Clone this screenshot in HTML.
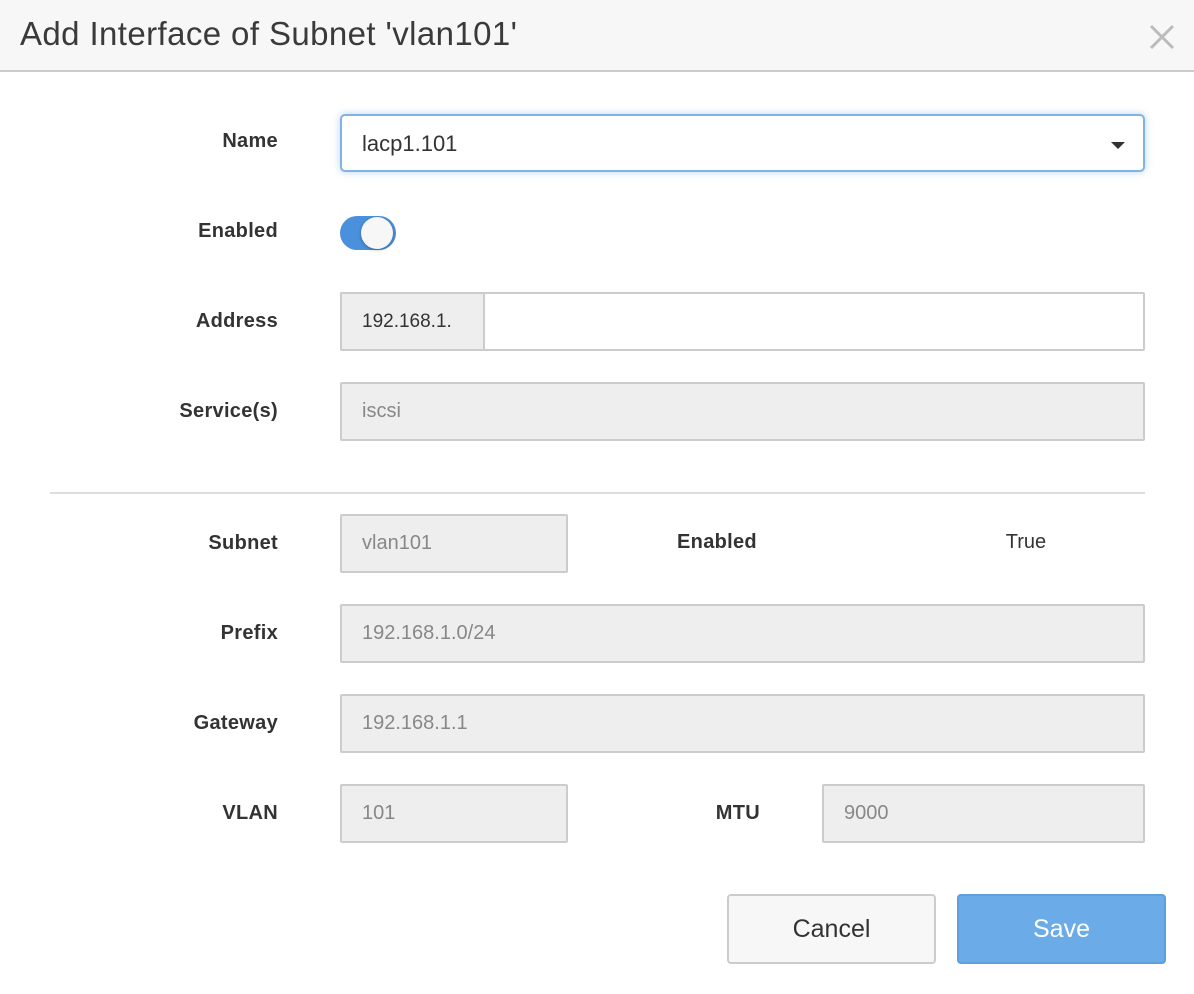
<!DOCTYPE html>
<html><head><style>
body{margin:0;width:1194px;height:994px;background:#fff;font-family:"Liberation Sans",sans-serif;position:relative;overflow:hidden}
.hd{position:absolute;left:0;top:0;width:1194px;height:70px;background:#f7f7f7;border-bottom:2px solid #ccc}
.t{position:absolute;left:20px;top:15px;font-size:33px;color:#3a3a3a;letter-spacing:0.4px}
.x{position:absolute;left:1148px;top:23px}
.l{position:absolute;width:278px;left:0;text-align:right;font-size:20px;font-weight:bold;color:#333;line-height:24px;letter-spacing:0.3px}
.i{position:absolute;box-sizing:border-box;height:59px;border:2px solid #ccc;background:#eee;font-size:20px;color:#888;line-height:55px;padding-left:20px;border-radius:2px}
.b{position:absolute;box-sizing:border-box;top:894px;height:70px;font-size:25px;text-align:center;line-height:66px;border-radius:4px}
</style></head><body>
<div class="hd"><div class="t">Add Interface of Subnet 'vlan101'</div>
<svg class="x" width="28" height="28" viewBox="0 0 28 28"><path d="M3 3L25 25M25 3L3 25" stroke="#bbb" stroke-width="3"/></svg></div>

<div class="l" style="top:129px">Name</div>
<div class="i" style="left:340px;top:114px;width:805px;height:58px;background:#fff;border-color:#7fb2e5;color:#333;font-size:22px;border-radius:5px;box-shadow:0 0 8px rgba(100,160,230,.45)">lacp1.101</div>
<svg style="position:absolute;left:1110px;top:140px" width="16" height="10"><path d="M1 2h14L8 9z" fill="#333"/></svg>

<div class="l" style="top:219px">Enabled</div>
<div style="position:absolute;left:340px;top:216px;width:56px;height:34px;border-radius:17px;background:#4a90dc"></div>
<div style="position:absolute;left:361px;top:217px;width:32px;height:32px;border-radius:16px;background:#f7f7f7;box-shadow:0 1px 3px rgba(0,0,0,.3)"></div>

<div class="l" style="top:309px">Address</div>
<div class="i" style="left:340px;top:292px;width:805px;background:#fff"></div>
<div class="i" style="left:340px;top:292px;width:145px;color:#333;font-size:19px">192.168.1.</div>

<div class="l" style="top:399px">Service(s)</div>
<div class="i" style="left:340px;top:382px;width:805px">iscsi</div>

<div style="position:absolute;left:50px;top:492px;width:1095px;height:2px;background:#ddd"></div>

<div class="l" style="top:531px">Subnet</div>
<div class="i" style="left:340px;top:514px;width:228px">vlan101</div>
<div style="position:absolute;left:617px;width:200px;text-align:center;top:531px;font-size:20px;font-weight:bold;color:#333;letter-spacing:0.3px">Enabled</div>
<div style="position:absolute;left:926px;width:200px;text-align:center;top:531px;font-size:20px;color:#333">True</div>

<div class="l" style="top:621px">Prefix</div>
<div class="i" style="left:340px;top:604px;width:805px">192.168.1.0/24</div>

<div class="l" style="top:711px">Gateway</div>
<div class="i" style="left:340px;top:694px;width:805px">192.168.1.1</div>

<div class="l" style="top:801px">VLAN</div>
<div class="i" style="left:340px;top:784px;width:228px">101</div>
<div class="l" style="top:801px;width:760px">MTU</div>
<div class="i" style="left:822px;top:784px;width:323px">9000</div>

<div class="b" style="left:727px;width:209px;background:#f7f7f7;border:2px solid #ccc;color:#333">Cancel</div>
<div class="b" style="left:957px;width:209px;background:#6aabe8;border:2px solid #5f9fdc;color:#fff">Save</div>
</body></html>
